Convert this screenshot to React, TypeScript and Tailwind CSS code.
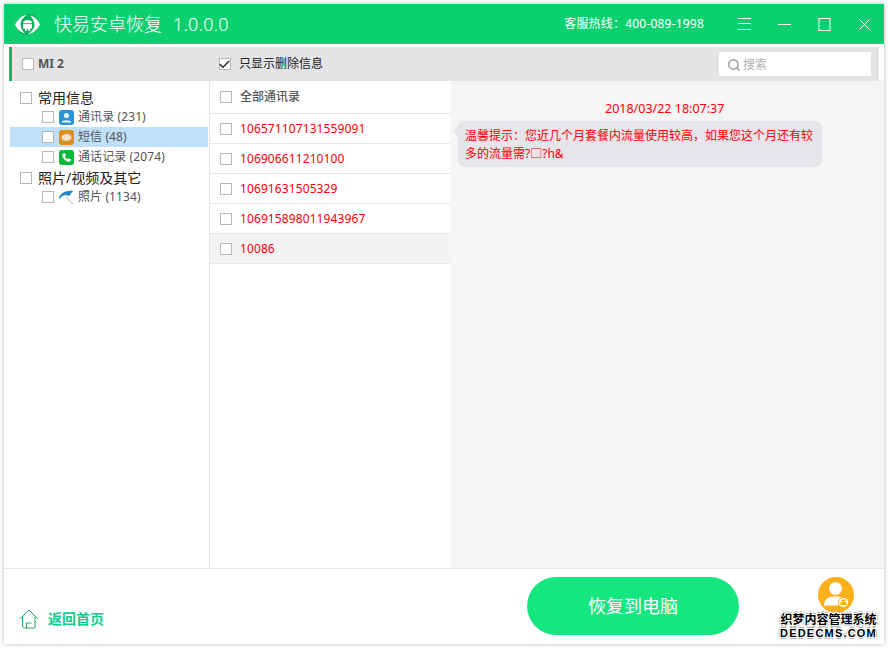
import { Search, Check } from 'lucide-react'

const font = "font-['Noto_Sans','Noto_Sans_CJK_SC',sans-serif]"

const Box = ({ checked = false }: { checked?: boolean }) => (
	<span className="flex size-3 shrink-0 items-center justify-center border border-[#b8b8b8] bg-white">
		{checked && <Check className="size-[13px] shrink-0 text-[#333]" strokeWidth={3} />}
	</span>
)

const Logo = () => (
	<svg width="25" height="21" viewBox="0 0 25 21">
		<path d="M0 10.5 C4 4 8 0.5 14 0 C20 0 23 5 25 10.5 C21 17 17 20.5 11 21 C5 21 2 16 0 10.5 Z" fill="#07b25f" />
		<path d="M0 10.5 C3 5 7 1.5 12 0.8 C9 3 6 5.5 5.5 10 C5.5 14 7.5 17 10 19.5 C5.5 18.5 2 15 0 10.5 Z" fill="#fff" />
		<path d="M25 10.5 C22 16 18 19.5 13 20.2 C16 18 19 15.5 19.5 11 C19.5 7 17.5 4 15 1.5 C19.5 2.5 23 6 25 10.5 Z" fill="#fff" />
		<path d="M8 9 C8 5 17 5 17 9 Z" fill="#fff" />
		<rect x="8" y="9.7" width="9" height="5" rx="1" fill="#fff" />
		<rect x="10" y="14" width="1.8" height="3" fill="#fff" />
		<rect x="13.2" y="14" width="1.8" height="3" fill="#fff" />
	</svg>
)

const MenuIcon = () => (
	<svg width="13" height="12" viewBox="0 0 13 12" stroke="#fff" strokeWidth="1">
		<path d="M0 .5H13M0 5.5H13M0 11.5H13" />
	</svg>
)

const MinIcon = () => (
	<svg width="13" height="12" viewBox="0 0 13 12" stroke="#fff" strokeWidth="1">
		<path d="M0 6.5H13" />
	</svg>
)

const MaxIcon = () => (
	<svg width="13" height="13" viewBox="0 0 13 13" fill="none" stroke="#fff" strokeWidth="1">
		<rect x="1" y=".5" width="11" height="12" />
	</svg>
)

const CloseIcon = () => (
	<svg width="13" height="13" viewBox="0 0 13 13" fill="none" stroke="#fff" strokeWidth="1">
		<path d="M1.5 1.5L11.5 11.5M11.5 1.5L1.5 11.5" />
	</svg>
)

const ContactIcon = () => (
	<svg width="15" height="15" viewBox="0 0 15 15">
		<rect width="15" height="15" rx="3" fill="#2b94d6" />
		<circle cx="7.5" cy="5.5" r="2.6" fill="#e8f4fb" />
		<path d="M2.5 12.5 C3 9.5 12 9.5 12.5 12.5 Z" fill="#e8f4fb" />
	</svg>
)

const SmsIcon = () => (
	<svg width="15" height="15" viewBox="0 0 15 15">
		<rect width="15" height="15" rx="3" fill="#d9901e" />
		<ellipse cx="7.5" cy="7.5" rx="5" ry="3.6" fill="#f3e3c4" />
	</svg>
)

const PhoneIcon = () => (
	<svg width="15" height="15" viewBox="0 0 15 15">
		<rect width="15" height="15" rx="3" fill="#0db83a" />
		<path d="M4 3.5 L5.8 3 L6.8 5.4 L5.8 6.4 C6.3 7.7 7.3 8.7 8.6 9.2 L9.6 8.2 L12 9.2 L11.5 11 C11 12 9.5 12 8 11.2 C5.8 10.2 4.8 9.2 3.8 7 C3.1 5.5 3.2 4.2 4 3.5 Z" fill="#fff" />
	</svg>
)

const PhotoIcon = () => (
	<svg width="15" height="15" viewBox="0 0 15 15">
		<path d="M0 8 C1 3 7 0 14 1 L10 6 L7 5 L3 6 L1 9 Z" fill="#1f86c7" />
		<path d="M7 7 L14 14" stroke="#c9d3da" strokeWidth="1.4" />
	</svg>
)

const HomeIcon = () => (
	<svg width="20" height="20" viewBox="0 0 20 20" fill="none" stroke="#22a565" strokeWidth="1">
		<path d="M0.8 10 L10 1 L19 10" />
		<path d="M3.5 8 L3.5 17 Q3.5 19 5.5 19 L16 19 L16 8" />
		<path d="M7.5 19 L7.5 14 L12.5 14" />
	</svg>
)

const Avatar = () => (
	<svg width="36" height="36" viewBox="0 0 36 36">
		<circle cx="18" cy="18" r="18" fill="#fdb01a" />
		<circle cx="17.5" cy="11.5" r="6.5" fill="#fff" />
		<path d="M6 28.5 C6 21 12 19.5 17.5 19.5 C23 19.5 28 21 28 28.5 Z" fill="#fff" />
		<circle cx="25.5" cy="25.5" r="5.5" fill="#fdb01a" />
		<circle cx="25.5" cy="25.5" r="4.6" fill="#fff" />
		<rect x="23.5" y="22.5" width="4" height="2" fill="#fdb01a" />
		<rect x="22.5" y="25" width="6" height="3" fill="#fdb01a" />
	</svg>
)

const sub = [
	{ label: '通讯录 (231)', icon: <ContactIcon /> },
	{ label: '短信 (48)', icon: <SmsIcon />, active: true },
	{ label: '通话记录 (2074)', icon: <PhoneIcon /> },
]

const numbers = ['106571107131559091', '106906611210100', '10691631505329', '106915898011943967', '10086']

const TreeItem = ({ label, icon, active }: { label: string; icon: React.ReactNode; active?: boolean }) => (
	<div className={`flex h-5 items-center pl-[32px] text-xs tracking-[0.1px] text-[#555] ${active ? 'bg-[#bfdffb]' : ''}`}>
		<Box />
		<span className="ml-[5px] mr-1">{icon}</span>
		<span>{label}</span>
	</div>
)

export default function App() {
	return (
		<div className={`relative h-[648px] w-[888px] overflow-hidden bg-white p-1 ${font}`}>
			<div className="flex h-[640px] w-[880px] flex-col bg-white shadow-[0_0_4px_rgba(0,0,0,0.3)]">
				<header className="flex h-10 shrink-0 items-center bg-[#0bd06f] text-white">
					<span className="ml-[11px] flex"><Logo /></span>
					<span className="ml-[14px] text-lg leading-none font-light">快易安卓恢复</span>
					<span className="ml-[11px] text-lg leading-none font-light tracking-[0.2px]">1.0.0.0</span>
					<span className="ml-auto text-xs tracking-[0.2px]">客服热线：400-089-1998</span>
					<div className="mr-[13px] ml-[34px] flex items-center gap-[27px]">
						<MenuIcon />
						<MinIcon />
						<MaxIcon />
						<CloseIcon />
					</div>
				</header>
				<div className="mx-[5px] mt-[3px] flex h-[34px] w-[870px] shrink-0 items-center border-l-[3px] border-[#0fb968] bg-[#e4e4e4]">
					<span className="ml-[10px]"><Box /></span>
					<span className="ml-1 text-xs font-bold text-[#555]">MI 2</span>
					<span className="ml-[155px]"><Box checked /></span>
					<span className="ml-2 text-xs text-[#222]">只显示删除信息</span>
					<div className="mr-2 ml-auto flex h-6 w-[152px] items-center bg-white pt-px pl-2 text-xs text-[#b0b0b0]">
						<Search className="mr-[2px] size-[14px] text-[#a8a8a8]" strokeWidth={3} />
						搜索
					</div>
				</div>
				<div className="flex min-h-0 flex-1">
					<aside className="w-[206px] shrink-0 border-r border-[#e5e5e5] pt-[7px] pr-px pl-[6px]">
						<div className="flex h-[19px] items-center pl-[10px] text-sm text-[#222]">
							<Box />
							<span className="ml-[6px]">常用信息</span>
						</div>
						{sub.map((s) => (
							<TreeItem key={s.label} {...s} />
						))}
						<div className="mt-px flex h-[19px] items-center pl-[10px] text-sm text-[#222]">
							<Box />
							<span className="ml-[6px]">照片/视频及其它</span>
						</div>
						<TreeItem label="照片 (1134)" icon={<PhotoIcon />} />
					</aside>
					<section className="w-[240px] shrink-0">
						<div className="flex h-[33px] items-center border-b border-[#e5e5e5] pl-[10px] text-xs font-medium text-[#555]">
							<Box />
							<span className="ml-2">全部通讯录</span>
						</div>
						{numbers.map((n, i) => (
							<div
								key={n}
								className={`flex h-[30px] items-center border-b border-[#e5e5e5] pl-[10px] text-xs tracking-[0.1px] text-[#f00] ${i === 4 ? 'bg-[#f4f4f4]' : ''}`}
							>
								<Box />
								<span className="ml-2">{n}</span>
							</div>
						))}
					</section>
					<section className="flex-1 bg-[#f5f5f5] pt-[20px] pl-2">
						<p className="ml-[147px] text-[12.5px] leading-4 text-[#f00]">2018/03/22 18:07:37</p>
						<div className="relative mt-[4px] h-[46px] w-[364px] rounded-md bg-[#e5e5ea] pt-[6px] pr-[6px] pl-[7px] text-xs leading-[18px] text-[#f00]">
							<span className="absolute top-[5px] -left-[5px] size-0 border-y-[5px] border-r-[5px] border-y-transparent border-r-[#e5e5ea]" />
							温馨提示：您近几个月套餐内流量使用较高，如果您这个月还有较多的流量需?□?h&amp;
						</div>
					</section>
				</div>
				<footer className="flex h-[76px] shrink-0 items-center border-t border-[#e5e5e5]">
					<span className="mt-[24px] ml-[15px] flex"><HomeIcon /></span>
					<span className="mt-[24px] ml-[9px] text-sm font-bold text-[#0ccf8f]">返回首页</span>
					<button
						type="button"
						className="mb-[2px] ml-[423px] h-[58px] w-[212px] rounded-full bg-[#15e67f] text-lg text-white"
					>
						恢复到电脑
					</button>
					<span className="mb-[23px] ml-[79px] flex"><Avatar /></span>
				</footer>
			</div>
			<div className="absolute top-[612px] left-[779px] w-[99px] text-center font-bold text-black [text-shadow:1px_0_#fff,-1px_0_#fff,0_1px_#fff,0_-1px_#fff,1px_1px_#fff,-1px_-1px_#fff,1px_-1px_#fff,-1px_1px_#fff,2px_0_#aaa,-2px_0_#aaa,0_2px_#aaa,0_-2px_#aaa]">
				<div className="text-xs leading-[15px]">织梦内容管理系统</div>
				<div className="font-['Liberation_Sans',sans-serif] text-[11px] leading-[13px] tracking-[1.2px]">DEDECMS.COM</div>
			</div>
		</div>
	)
}
